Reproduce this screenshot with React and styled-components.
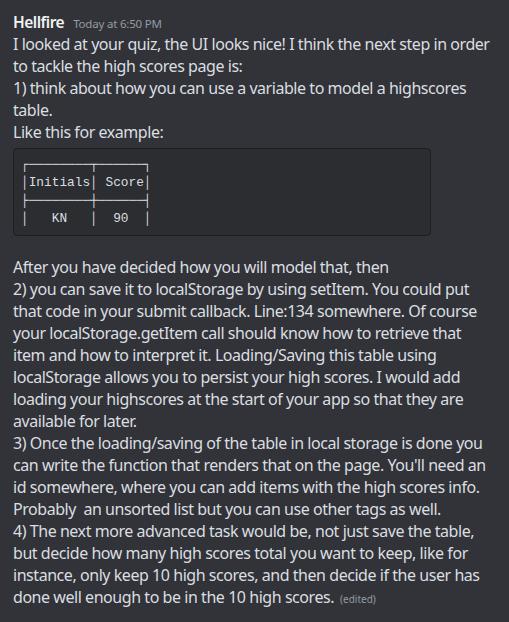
import styled, { createGlobalStyle } from 'styled-components';

const Global = createGlobalStyle`
  html, body {
    margin: 0;
    padding: 0;
    background: #313338;
  }
`

const Message = styled.div`
  box-sizing: border-box;
  width: 509px;
  min-height: 622px;
  padding: 11px 13px 0 13px;
  background: #313338;
  font-family: "Noto Sans", "Open Sans", sans-serif;
  color: #dbdee1;
`

const Header = styled.div`
  display: flex;
  align-items: baseline;
  gap: 9px;
  height: 22px;
  line-height: 22px;
`

const Username = styled.span`
  font-size: 15.5px;
  font-weight: 600;
  color: #f2f3f5;
  letter-spacing: -0.5px;
`

const Timestamp = styled.span`
  font-size: 11.5px;
  color: #949ba4;
  letter-spacing: -0.2px;
`

const Text = styled.div`
  font-size: 16px;
  line-height: 22px;
  letter-spacing: -0.45px;
  white-space: pre;
`

const CodeBlock = styled.pre`
  box-sizing: border-box;
  width: 418px;
  margin: 5px 0 20px 0;
  padding: 7px;
  background: #2b2d31;
  border: 1px solid #1e1f22;
  border-radius: 4px;
  font-family: "Liberation Mono", "DejaVu Sans Mono", monospace;
  font-size: 12.8px;
  line-height: 18px;
  color: #dbdee1;
`

const Edited = styled.span`
  font-size: 10px;
  color: #949ba4;
  letter-spacing: 0;
  margin-left: 6px;
`

const intro = `I looked at your quiz, the UI looks nice! I think the next step in order
to tackle the high scores page is:
1) think about how you can use a variable to model a highscores
table.
Like this for example:`

const table = `┌────────┬──────┐
│Initials│ Score│
├────────┼──────┤
│   KN   │  90  │`

const rest = `After you have decided how you will model that, then
2) you can save it to localStorage by using setItem. You could put
that code in your submit callback. Line:134 somewhere. Of course
your localStorage.getItem call should know how to retrieve that
item and how to interpret it. Loading/Saving this table using
localStorage allows you to persist your high scores. I would add
loading your highscores at the start of your app so that they are
available for later.
3) Once the loading/saving of the table in local storage is done you
can write the function that renders that on the page. You'll need an
id somewhere, where you can add items with the high scores info.
Probably  an unsorted list but you can use other tags as well.
4) The next more advanced task would be, not just save the table,
but decide how many high scores total you want to keep, like for
instance, only keep 10 high scores, and then decide if the user has`

function App() {
  return (
    <>
      <Global />
      <Message>
        <Header>
          <Username>Hellfire</Username>
          <Timestamp>Today at 6:50 PM</Timestamp>
        </Header>
        <Text>{intro}</Text>
        <CodeBlock>{table}</CodeBlock>
        <Text>{rest}</Text>
        <Text>
          done well enough to be in the 10 high scores.
          <Edited>(edited)</Edited>
        </Text>
      </Message>
    </>
  )
}

export default App;
